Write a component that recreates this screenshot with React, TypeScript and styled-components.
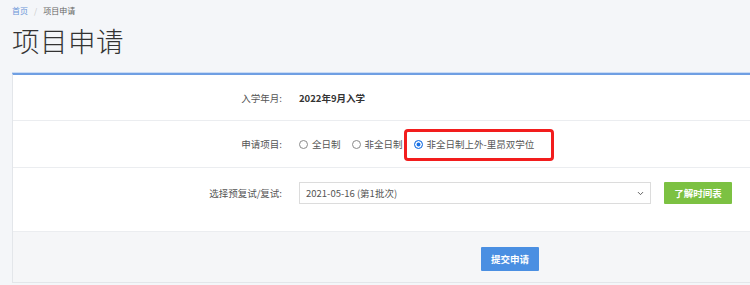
import React from 'react';
import styled, { createGlobalStyle } from 'styled-components';
import { ChevronDown } from 'lucide-react';

const GlobalStyle = createGlobalStyle`
  html, body {
    margin: 0;
    padding: 0;
    background: #f4f6f9;
    overflow: hidden;
    font-family: "Noto Sans CJK SC", "Noto Sans", "Liberation Sans", sans-serif;
  }
`;

const Page = styled.div`
  padding-left: 12px;
`;

const Breadcrumb = styled.div`
  display: flex;
  gap: 6px;
  padding-top: 6px;
  font-size: 8px;
  line-height: 10px;
  color: #666;
`;

const Crumb = styled.span<{ $link?: boolean; $sep?: boolean }>`
  color: ${(p) => (p.$link ? '#6a95d8' : p.$sep ? '#c8c8c8' : '#666')};
`;

const Title = styled.h1`
  margin: 9px 0 18px;
  font-size: 27.5px;
  line-height: 30px;
  font-weight: 300;
  color: #333;
  letter-spacing: 0.5px;
`;

const Panel = styled.div`
  background: #fff;
  border-top: 2px solid #6f9fe3;
  border-left: 1px solid #e3e6ea;
  box-shadow: 0 -1px 0 #c9dbf5;
`;

const Row = styled.div<{ $height: number; $top?: number }>`
  display: grid;
  grid-template-columns: 269px 1fr;
  column-gap: 17px;
  align-items: ${(p) => (p.$top ? 'start' : 'center')};
  box-sizing: border-box;
  height: ${(p) => p.$height}px;
  padding-top: ${(p) => p.$top ?? 0}px;
  border-bottom: 1px solid #ebedf0;
  font-size: 9.5px;
  color: #555;
`;

const Label = styled.div`
  text-align: right;
  line-height: 22px;
`;

const Value = styled.div`
  font-weight: 700;
  color: #333;
`;

const Radios = styled.div`
  display: flex;
  align-items: center;
`;

const Option = styled.label<{ $highlight?: boolean }>`
  position: relative;
  display: flex;
  align-items: center;
  gap: 4px;
  line-height: 12px;
  margin-right: ${(p) => (p.$highlight ? 0 : 11)}px;
  color: #555;

  &::after {
    content: '';
    display: ${(p) => (p.$highlight ? 'block' : 'none')};
    position: absolute;
    left: -10px;
    right: -20px;
    top: -9px;
    bottom: -11px;
    border: 3px solid #f21d1d;
    border-radius: 4px;
  }
`;

const Dot = styled.span<{ $checked?: boolean }>`
  box-sizing: border-box;
  width: 9px;
  height: 9px;
  border-radius: 50%;
  border: 1px solid ${(p) => (p.$checked ? '#2a7be4' : '#8a8a8a')};
  background: ${(p) => (p.$checked ? '#1a73e8' : '#fff')};
  box-shadow: ${(p) => (p.$checked ? 'inset 0 0 0 1.5px #fff' : 'none')};
`;

const Controls = styled.div`
  display: flex;
  align-items: center;
  gap: 13px;
`;

const SelectWrap = styled.div`
  position: relative;
  width: 352px;
  height: 22px;

  svg {
    position: absolute;
    right: 6px;
    top: 7px;
    color: #555;
    pointer-events: none;
  }
`;

const Select = styled.select`
  appearance: none;
  box-sizing: border-box;
  width: 100%;
  height: 22px;
  padding: 0 6px;
  border: 1px solid #dcdcdc;
  background: #fff;
  font-family: inherit;
  font-size: 9.5px;
  color: #555;
  outline: none;
`;

const Button = styled.button<{ $color: string; $w: number; $h: number }>`
  width: ${(p) => p.$w}px;
  height: ${(p) => p.$h}px;
  border: none;
  border-radius: 1px;
  background: ${(p) => p.$color};
  color: #fff;
  font-family: inherit;
  font-size: 9.5px;
  font-weight: 700;
  padding: 0;
  cursor: pointer;
`;

const Footer = styled.div`
  box-sizing: border-box;
  height: 51px;
  padding: 12px 0 0 468px;
  background: #f5f6f8;
  border-bottom: 1px solid #e3e6ea;
`;

const App: React.FC = () => {
  const [project, setProject] = React.useState('lyon');

  const options = [
    { key: 'full', text: '全日制' },
    { key: 'part', text: '非全日制' },
    { key: 'lyon', text: '非全日制上外-里昂双学位' },
  ];

  return (
    <>
      <GlobalStyle />
      <Page>
        <Breadcrumb>
          <Crumb $link>首页</Crumb>
          <Crumb $sep>/</Crumb>
          <Crumb>项目申请</Crumb>
        </Breadcrumb>
        <Title>项目申请</Title>
        <Panel>
          <Row $height={46}>
            <Label>入学年月:</Label>
            <Value>2022年9月入学</Value>
          </Row>
          <Row $height={47}>
            <Label>申请项目:</Label>
            <Radios>
              {options.map((o) => (
                <Option
                  key={o.key}
                  $highlight={o.key === 'lyon'}
                  onClick={() => setProject(o.key)}
                >
                  <Dot $checked={project === o.key} />
                  {o.text}
                </Option>
              ))}
            </Radios>
          </Row>
          <Row $height={64} $top={14}>
            <Label>选择预复试/复试:</Label>
            <Controls>
              <SelectWrap>
                <Select defaultValue="2021-05-16">
                  <option value="2021-05-16">2021-05-16 (第1批次)</option>
                </Select>
                <ChevronDown size={9} strokeWidth={2.5} />
              </SelectWrap>
              <Button $color="#7cc142" $w={68} $h={22}>了解时间表</Button>
            </Controls>
          </Row>
          <Footer>
            <Button $color="#4a8fe2" $w={58} $h={24}>提交申请</Button>
          </Footer>
        </Panel>
      </Page>
    </>
  );
};

export default App;
